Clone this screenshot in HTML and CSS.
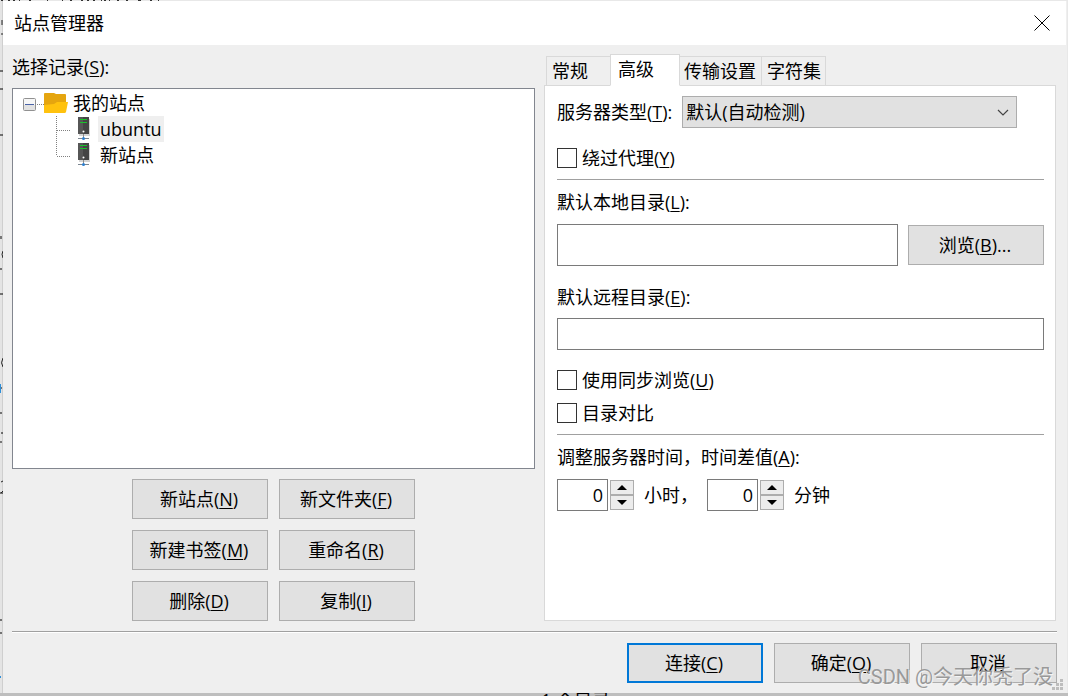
FILE: index.html
```html
<!DOCTYPE html>
<html lang="zh-CN">
<head>
<meta charset="utf-8">
<title>站点管理器</title>
<link rel="stylesheet" href="styles.css">
</head>
<body>
<svg class="symbols" aria-hidden="true">
  <symbol id="server" viewBox="0 0 14 24">
    <path d="M2 2h11v17H2z" fill="#d4d4d4"/>
    <path d="M1 0h11v17H1z" fill="#454545"/>
    <path d="M1 0h5v17H1z" fill="#565656"/>
    <path d="M3 2h7v1H3zM3 5h7v1H3z" fill="#19c22b"/>
    <circle cx="6.500" cy="14.500" r="1" fill="#fff"/>
    <path d="M6 17h1v4H6z" fill="#8a8a8a"/>
    <path d="M1 21.500h11" stroke="#7a8590"/>
    <circle cx="6.500" cy="21.500" r="1.500" fill="#2c7fd0"/>
  </symbol>
</svg>
<svg class="edge-left" width="3" height="696" viewBox="0 0 3 696" aria-hidden="true">
  <path d="M0 71h3M0 89h3M0 135h3M0 294h3M0 269h2M0 388h2M0 413h2M1 433h2M0 493h3M0 620h2M0 633h2" stroke="#000"/>
  <path d="M0 236h2v3H0zM0 441h2v2H0z" fill="#777"/>
  <path d="M0 384h1v9H0zM0 676h1v2H0z" fill="#2f8fd8"/>
  <path d="M3 251q-2 3 0 7M3 358q-3 5 0 9M3 481l-2 1M3 491l-2 2M2 20v5M2 33v2" stroke="#222" fill="none"/>
</svg>
<svg class="edge-top" width="170" height="1" viewBox="0 0 170 1" aria-hidden="true"><path d="M1 .5h2M8 .5h2M13 .5h2M19 .5h1M29 .5h2M47 .5h1M62 .5h1M70 .5h2M81 .5h2M87 .5h2M93 .5h2M101 .5h1M104 .5h2M109 .5h1M117 .5h2M126 .5h2M138 .5h3M150 .5h2M158 .5h1" stroke="#333"/></svg>
<div class="edge-bottom" aria-hidden="true">1 个目录</div>
<div class="window">
  <header class="titlebar">
    <h1 class="title">站点管理器</h1>
    <button class="close" type="button" aria-label="关闭">
      <svg width="16" height="16" viewBox="0 0 16 16"><path d="M.5.5l15 15M15.5.5l-15 15" stroke="#000" fill="none"/></svg>
    </button>
  </header>
  <main class="main">
    <section class="records">
      <div class="label" id="records-label">选择记录(<u>S</u>):</div>
      <ul class="tree" role="tree" aria-labelledby="records-label">
        <li>
          <div class="node">
            <svg width="21" height="26" viewBox="0 0 21 26">
              <rect x=".5" y="8.500" width="12" height="12" rx="1" fill="#f6f6f6" stroke="#919191"/>
              <path d="M1 15h11v5H1z" fill="#e2e2e2"/>
              <path d="M2 14.500h9" stroke="#4a63a8"/>
              <path d="M14 14.500h7" stroke="#808080" stroke-dasharray="1 1"/>
            </svg>
            <svg class="folder" width="25" height="22" viewBox="0 0 25 22">
              <path d="M0 2q0-1 1-1h9l2 1h9q1 0 1 1v16H0z" fill="#e5a50f"/>
              <path d="M0 20V13l10-1 3-2h11l-2 10q-.3 1-1.500 1H1q-1 0-1-.5z" fill="#ffc20e"/>
            </svg>
            <span>我的站点</span>
          </div>
          <ul class="children">
            <li class="node">
              <svg width="16" height="26" viewBox="0 0 16 26"><path d="M.5 0v26M1 14.500h14" stroke="#808080" stroke-dasharray="1 1"/></svg>
              <svg class="server" width="14" height="24"><use href="#server"/></svg>
              <span class="name selected">ubuntu</span>
            </li>
            <li class="node">
              <svg width="16" height="26" viewBox="0 0 16 26"><path d="M.5 0v14M1 14.500h14" stroke="#808080" stroke-dasharray="1 1"/></svg>
              <svg class="server" width="14" height="24"><use href="#server"/></svg>
              <span class="name">新站点</span>
            </li>
          </ul>
        </li>
      </ul>
      <div class="actions">
        <button class="btn" type="button">新站点(<u>N</u>)</button>
        <button class="btn" type="button">新文件夹(<u>F</u>)</button>
        <button class="btn" type="button">新建书签(<u>M</u>)</button>
        <button class="btn" type="button">重命名(<u>R</u>)</button>
        <button class="btn" type="button">删除(<u>D</u>)</button>
        <button class="btn" type="button">复制(<u>I</u>)</button>
      </div>
    </section>
    <section class="notebook">
      <div class="tabs" role="tablist">
        <button class="tab tab-general" type="button" role="tab">常规</button>
        <button class="tab tab-active" type="button" role="tab" aria-selected="true">高级</button>
        <button class="tab" type="button" role="tab">传输设置</button>
        <button class="tab tab-charset" type="button" role="tab">字符集</button>
      </div>
      <div class="panel" role="tabpanel">
        <div class="server-type">
          <label for="type">服务器类型(<u>T</u>):</label>
          <select id="type" class="select"><option>默认(自动检测)</option></select>
        </div>
        <label class="check check-spaced"><input type="checkbox"><span>绕过代理(<u>Y</u>)</span></label>
        <hr class="rule">
        <label class="label local-label" for="local">默认本地目录(<u>L</u>):</label>
        <div class="browse">
          <input id="local" class="field field-tall" type="text">
          <button class="btn" type="button">浏览(<u>B</u>)...</button>
        </div>
        <label class="label remote-label" for="remote">默认远程目录(<u>E</u>):</label>
        <input id="remote" class="field" type="text">
        <label class="check check-spaced"><input type="checkbox"><span>使用同步浏览(<u>U</u>)</span></label>
        <label class="check check-tight"><input type="checkbox"><span>目录对比</span></label>
        <hr class="rule">
        <label class="label local-label" for="hours">调整服务器时间，时间差值(<u>A</u>):</label>
        <div class="offset">
          <div class="spin">
            <input id="hours" class="field number" type="text" value="0">
            <div class="steps">
              <button type="button" aria-label="增加小时"><svg width="10" height="5" viewBox="0 0 10 5"><path d="M0 5l5-5 5 5z"/></svg></button>
              <button type="button" aria-label="减少小时"><svg width="10" height="5" viewBox="0 0 10 5"><path d="M0 0l5 5 5-5z"/></svg></button>
            </div>
          </div>
          <label class="unit-hours" for="hours">小时，</label>
          <div class="spin">
            <input id="minutes" class="field number" type="text" value="0">
            <div class="steps">
              <button type="button" aria-label="增加分钟"><svg width="10" height="5" viewBox="0 0 10 5"><path d="M0 5l5-5 5 5z"/></svg></button>
              <button type="button" aria-label="减少分钟"><svg width="10" height="5" viewBox="0 0 10 5"><path d="M0 0l5 5 5-5z"/></svg></button>
            </div>
          </div>
          <label for="minutes">分钟</label>
        </div>
      </div>
    </section>
  </main>
  <footer class="footer">
    <button class="btn btn-default" type="button">连接(<u>C</u>)</button>
    <button class="btn" type="button">确定(<u>O</u>)</button>
    <button class="btn" type="button">取消</button>
  </footer>
</div>
<svg class="grip" width="12" height="12" viewBox="0 0 12 12" aria-hidden="true"><path d="M8 0h3v3H8zM4 4h3v3H4zM8 4h3v3H8zM0 8h3v3H0zM4 8h3v3H4zM8 8h3v3H8z" fill="#bdbdbd"/></svg>
<div class="watermark">CSDN @今天你秃了没</div>
</body>
</html>
```
FILE: styles.css
```css
* { box-sizing: border-box; }

body {
  margin: 0;
  min-height: 100vh;
  display: flex;
  padding: 1px 1px 3px 3px;
  background: linear-gradient(to right, #e4e4e4 0, #e4e4e4 2px, #cfcfcf 2px, #cfcfcf 3px, #e8e8e8 3px) 0 0 / 100% calc(100% - 3px) no-repeat, #bebebe;
  color: #000;
  font: 18px/26px "Open Sans", "Noto Sans CJK SC", sans-serif;
}

button, input, select { font: inherit; color: inherit; margin: 0; }
u { text-underline-offset: 2px; text-decoration-thickness: 1px; }
ul { list-style: none; margin: 0; padding: 0; }
svg { display: block; flex: none; }
.symbols { position: absolute; width: 0; height: 0; }
.edge-left { position: absolute; left: 0; top: 0; }
.edge-top { position: absolute; left: 0; top: 0; }
.edge-bottom { position: absolute; left: 541px; bottom: 0; height: 4px; line-height: 16px; overflow: hidden; }

.window { position: relative; flex: 1; display: flex; flex-direction: column; background: #efefef; }
.titlebar { display: flex; justify-content: space-between; align-items: center; height: 44px; padding: 0 16px 0 11px; margin-right: 1px; background: #fff; }
.title { margin: 0; font: inherit; }
.close { padding: 0; border: 0; background: none; }

.main { flex: 1; display: flex; gap: 9px; padding: 9px 11px 10px 9px; }
.records { flex: 523 1 0; min-width: 0; display: flex; flex-direction: column; }
.label { display: block; }
.tree { flex: 1; margin: 8px 0 10px; padding: 1px 10px; background: #fff; border: 1px solid #82868f; }
.node { display: flex; align-items: center; height: 26px; }
.folder { margin-right: 4px; }
.children { padding-left: 33px; }
.server { margin: 0 7px 0 5px; }
.name { padding: 0 2px; }
.selected { background: #efefef; }
.actions { display: grid; grid-template-columns: 136px 136px; justify-content: center; gap: 11px; }
.btn { flex: none; width: 136px; height: 40px; padding: 0 2px 0 0; border: 1px solid #adadad; background: #e1e1e1; }
.btn-default { border: 2px solid #0078d7; }

.notebook { flex: 512 1 0; min-width: 0; display: flex; flex-direction: column; }
.tabs { display: flex; align-items: flex-end; height: 32px; padding-left: 2px; margin-bottom: -1px; }
.tab { height: 30px; padding: 0 5px 0 4px; border: 1px solid #d9d9d9; border-left-width: 0; background: #efefef; }
.tab-general { width: 64px; border-left-width: 1px; border-right-width: 0; text-align: left; padding-left: 5px; }
.tab-active { width: 70px; height: 32px; padding: 0 0 3px 7px; border-left-width: 1px; border-bottom-color: #fff; background: #fff; text-align: left; z-index: 1; }
.tab-charset { padding: 0 4px 0 5px; }
.panel { flex: 1; padding: 10px 11px 0 12px; background: #fff; border: 1px solid #d9d9d9; }
.server-type { display: flex; align-items: center; gap: 10px; margin-right: 27px; }
.select {
  flex: 1; min-width: 0; height: 32px; padding: 0 3px; border: 1px solid #adadad; border-radius: 0; appearance: none;
  background: #e1e1e1 url("data:image/svg+xml,%3Csvg xmlns='http://www.w3.org/2000/svg' width='12' height='7'%3E%3Cpath d='M1 1l5 5 5-5' fill='none' stroke='%23444' stroke-width='1.200'/%3E%3C/svg%3E") right 7px center no-repeat;
}
.check { display: flex; align-items: center; gap: 5px; }
.check input { appearance: none; width: 20px; height: 20px; border: 1px solid #333; background: #fff; }
.check-spaced { margin-top: 17px; }
.check-tight { margin-top: 7px; }
.rule { height: 1px; margin: 8px 0 0; border: 0; background: #a0a0a0; }
.local-label { margin: 9px 0; }
.browse { display: flex; align-items: center; gap: 10px; }
.field { width: 100%; height: 32px; padding: 0 4px; border: 1px solid #7a7a7a; background: #fff; }
.field-tall { flex: 1; min-width: 0; height: 42px; }
.remote-label { margin: 18px 0 8px; }
.offset { display: flex; align-items: center; gap: 10px; }
.spin { display: flex; align-items: center; gap: 2px; }
.number { width: 51px; text-align: right; }
.steps { display: grid; width: 24px; }
.steps button { display: grid; place-items: center; height: 15px; padding: 0; border: 1px solid #adadad; background: #ececec; }
.unit-hours { width: 53px; white-space: nowrap; }

.footer { display: flex; justify-content: flex-end; gap: 11px; margin: 0 10px 0 9px; padding: 11px 0 10px; border-top: 1px solid #a0a0a0; box-shadow: inset 0 1px #fff; }

.watermark { position: absolute; right: 15px; bottom: 5px; font-family: Roboto, "Noto Sans CJK SC", sans-serif; font-size: 20px; line-height: 28px; color: #999; text-shadow: 1px 1px #f5f5f5; pointer-events: none; }
.grip { position: absolute; right: 4px; bottom: 5px; }
```
